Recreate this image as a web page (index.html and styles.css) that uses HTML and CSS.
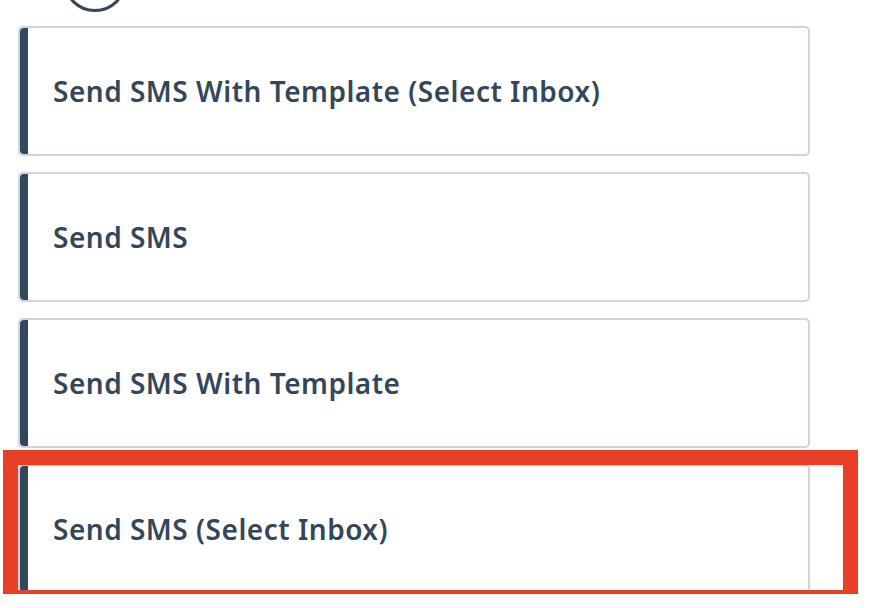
FILE: index.html
```html
<!DOCTYPE html>
<html lang="en">
<head>
  <meta charset="UTF-8">
  <meta name="viewport" content="width=device-width, initial-scale=1.0">
  <title>Actions</title>
  <link rel="stylesheet" href="styles.css">
</head>
<body>

<div class="avatar"></div>

<ul class="action-list">
  <li class="action-card">
    <span class="action-name">Send SMS With Template (Select Inbox)</span>
  </li>
  <li class="action-card">
    <span class="action-name">Send SMS</span>
  </li>
  <li class="action-card">
    <span class="action-name">Send SMS With Template</span>
  </li>
  <li class="action-card highlighted">
    <span class="action-name">Send SMS (Select Inbox)</span>
  </li>
</ul>

</body>
</html>
```

FILE: styles.css
```css
/* base */
body {
  margin: 0;
  padding: 0;
  background-color: #fff;
  font-family: 'Noto Sans', sans-serif;
  color: #33475b;
  overflow: hidden;
}

/* round icon above the list, mostly scrolled away */
.avatar {
  width: 58px;
  height: 58px;
  margin: -52px 0 0 63px;
  border: 3px solid #33475b;
  border-radius: 50%;
}

.action-list {
  list-style: none;
  margin: 14px 0 0 18px;
  padding: 0;
  width: 792px;
  display: flex;
  flex-direction: column;
  gap: 16px;
}

.action-card {
  position: relative;
  height: 126px;
  display: flex;
  align-items: center;
  border: 2px solid #cbd6e2;
  border-radius: 5px;
  background-color: #fff;
}
.action-card::before {
  content: '';
  align-self: stretch;
  width: 8px;
  border-radius: 4px 0 0 4px;
  background-color: #33475b;
}

.action-name {
  margin-left: 25px;
  font-size: 28px;
  font-weight: 600;
  letter-spacing: 0.5px;
}

/* red frame drawn over the selected card */
.action-card.highlighted::after {
  content: '';
  position: absolute;
  top: -16px;
  left: -17px;
  right: -50px;
  bottom: -13px;
  border: 15px solid #e84026;
}
```
